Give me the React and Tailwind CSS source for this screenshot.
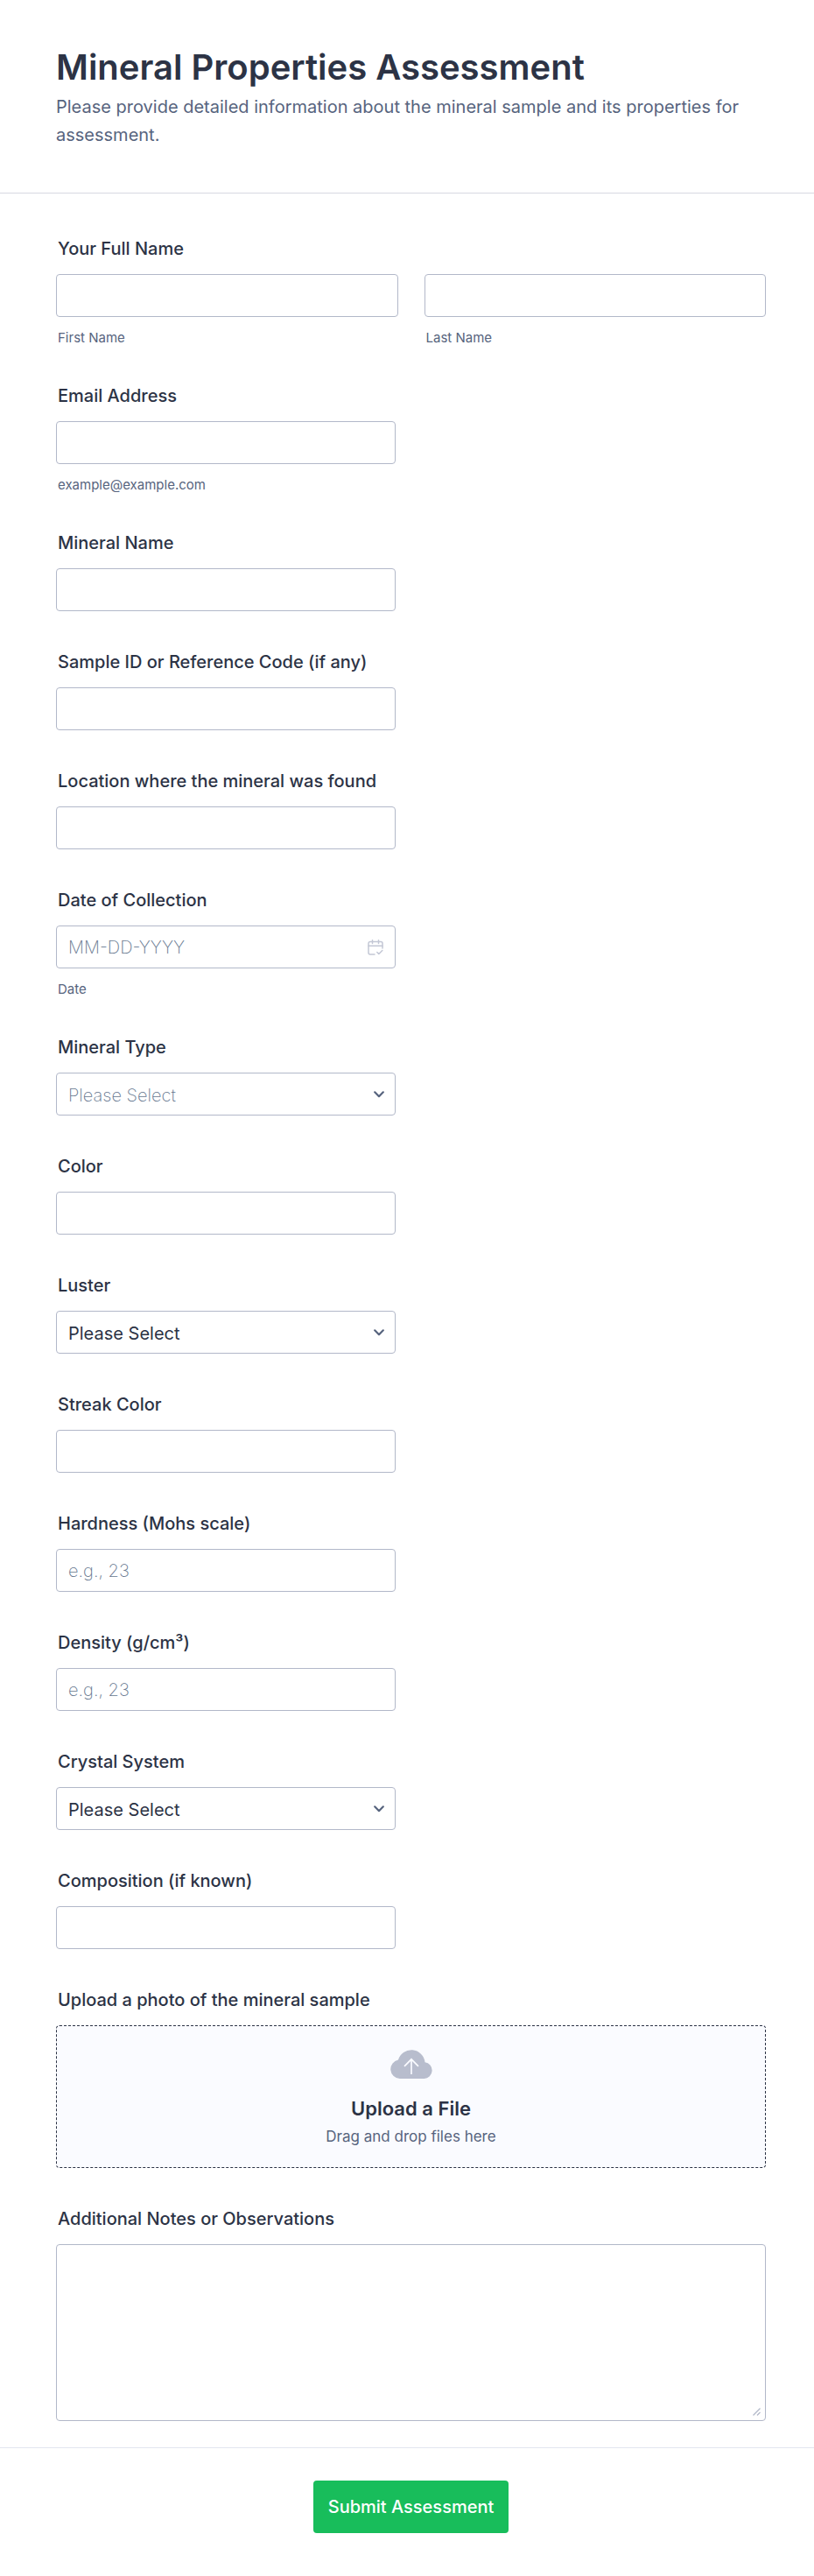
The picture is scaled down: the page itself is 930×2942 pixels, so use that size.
/**
 * Mineral Properties Assessment form.
 *
 * Single column form card: header, list of fields, file drop area,
 * notes and a centered submit button.
 */

const INPUT_CLASS =
  "h-[49px] rounded border border-[#b2b8c9] bg-white px-[13px] text-[20px] outline-none placeholder:font-extralight placeholder:text-[#66778f] focus:border-blue-500";

// Fields between the name row and the upload area, in display order
const FIELDS = [
  { id: "email", label: "Email Address", type: "email", hint: "example@example.com" },
  { id: "mineral-name", label: "Mineral Name" },
  { id: "sample-id", label: "Sample ID or Reference Code (if any)" },
  { id: "location", label: "Location where the mineral was found" },
  { id: "collection-date", label: "Date of Collection", kind: "date", placeholder: "MM-DD-YYYY", hint: "Date" },
  {
    id: "mineral-type",
    label: "Mineral Type",
    kind: "select",
    muted: true,
    options: ["Silicate", "Carbonate", "Oxide", "Sulfide", "Other"],
  },
  { id: "color", label: "Color" },
  {
    id: "luster",
    label: "Luster",
    kind: "select",
    options: ["Metallic", "Vitreous", "Pearly", "Silky", "Dull"],
  },
  { id: "streak-color", label: "Streak Color" },
  { id: "hardness", label: "Hardness (Mohs scale)", placeholder: "e.g., 23" },
  { id: "density", label: "Density (g/cm³)", placeholder: "e.g., 23" },
  {
    id: "crystal-system",
    label: "Crystal System",
    kind: "select",
    options: ["Cubic", "Tetragonal", "Hexagonal", "Monoclinic", "Triclinic"],
  },
  { id: "composition", label: "Composition (if known)" },
];

function CalendarIcon({ className }) {
  return (
    <svg viewBox="0 0 18 18" fill="none" stroke="currentColor" strokeWidth="1.5" strokeLinecap="round" className={className}>
      <path d="M8 17H3a2 2 0 0 1-2-2V4.500a2 2 0 0 1 2-2h12a2 2 0 0 1 2 2V10" />
      <path d="M1 7.200h16M5.500.800v3.600M12.500.800v3.600" />
      <path d="M10.800 14.500l2 2 4-4" strokeLinejoin="round" />
    </svg>
  );
}

function ChevronIcon({ className }) {
  return (
    <svg viewBox="0 0 12 8" fill="none" stroke="currentColor" strokeWidth="2.200" strokeLinecap="round" strokeLinejoin="round" className={className}>
      <path d="M1.200 1.300L6 6.200l4.800-4.900" />
    </svg>
  );
}

function CloudUploadIcon({ className }) {
  return (
    <svg viewBox="0 0 48 33" fill="none" className={className}>
      <path
        d="M10.8 33A10.8 10.8 0 0 1 9 11.6A15.6 15.6 0 0 1 39.500 14.200A9.450 9.450 0 0 1 38.600 33Z"
        fill="#b8bdcd"
      />
      <path d="M24 28V11M16 18.800l8-8 8 8" stroke="#fafbff" strokeWidth="1.700" />
    </svg>
  );
}

function GripIcon({ className }) {
  return (
    <svg viewBox="0 0 9 9" fill="none" stroke="currentColor" strokeWidth="1.300" className={className}>
      <path d="M.500 8.500l8-8M5 8.500L8.500 5" />
    </svg>
  );
}

function Label({ htmlFor, children }) {
  return (
    <label htmlFor={htmlFor} className="block pl-0.5 text-[20px] leading-6 font-medium">
      {children}
    </label>
  );
}

function Hint({ id, children }) {
  return (
    <p id={id} className="mt-[15px] pl-0.5 text-[15px] leading-[17px] text-[#57647e]">
      {children}
    </p>
  );
}

function NamePart({ id, label }) {
  return (
    <div className="flex flex-col">
      <input id={id} type="text" className={`${INPUT_CLASS} text-[#2c3345]`} />
      <label htmlFor={id} className="mt-[15px] pl-0.5 text-[15px] leading-[17px] text-[#57647e]">
        {label}
      </label>
    </div>
  );
}

/** Text, date or select field with its label and optional hint */
function Field({ id, label, kind = "text", type = "text", placeholder, hint, muted, options }) {
  const hintId = hint ? `${id}-hint` : undefined;

  return (
    <div>
      <Label htmlFor={id}>{label}</Label>
      <div className="relative mt-[17px] w-[388px] max-w-full">
        {kind === "select" ? (
          <>
            <select
              id={id}
              defaultValue=""
              className={`${INPUT_CLASS} w-full appearance-none pt-0.5 ${muted ? "font-extralight text-[#66778f]" : "text-[#2c3345]"}`}
            >
              <option value="">Please Select</option>
              {options.map((option) => (
                <option key={option}>{option}</option>
              ))}
            </select>
            <ChevronIcon className="pointer-events-none absolute top-[21px] right-[13px] h-2 w-3 text-[#57647e]" />
          </>
        ) : (
          <>
            <input
              id={id}
              type={type}
              placeholder={placeholder}
              aria-describedby={hintId}
              className={`${INPUT_CLASS} w-full text-[#2c3345]`}
            />
            {kind === "date" && (
              <CalendarIcon className="pointer-events-none absolute top-4 right-[14px] size-[18px] text-[#c3c7d5]" />
            )}
          </>
        )}
      </div>
      {hint && <Hint id={hintId}>{hint}</Hint>}
    </div>
  );
}

export default function App() {
  return (
    <main className="bg-white font-['Inter',sans-serif] text-[#2c3345]">
      <form onSubmit={(e) => e.preventDefault()}>
        {/* Header */}
        <header className="border-b border-[#d7d8e1] pt-[52px] pr-[55px] pb-[50px] pl-16">
          <h1 className="text-[40px] leading-[50px] font-semibold">Mineral Properties Assessment</h1>
          <p className="mt-1 text-[20px] leading-8 text-[#57647e]">
            Please provide detailed information about the mineral sample and its properties for assessment.
          </p>
        </header>

        {/* Fields */}
        <div className="flex flex-col gap-[46px] pt-[51px] pr-[55px] pb-[30px] pl-16">
          <fieldset>
            <legend className="pl-0.5 text-[20px] leading-6 font-medium">Your Full Name</legend>
            <div className="mt-[17px] grid grid-cols-2 gap-[30px]">
              <NamePart id="first-name" label="First Name" />
              <NamePart id="last-name" label="Last Name" />
            </div>
          </fieldset>

          {FIELDS.map((field) => (
            <Field key={field.id} {...field} />
          ))}

          {/* File drop area */}
          <div>
            <Label htmlFor="photo">Upload a photo of the mineral sample</Label>
            <label
              htmlFor="photo"
              className="mt-[17px] flex cursor-pointer flex-col items-center rounded border border-dashed border-[#2c3345] bg-[#fafbff] pt-[27px] pb-[23px]"
            >
              <CloudUploadIcon className="h-[33px] w-12" />
              <span className="mt-5 text-[22px] leading-7 font-semibold">Upload a File</span>
              <span className="mt-1.5 text-[17px] leading-6 text-[#57647e]">Drag and drop files here</span>
              <input id="photo" type="file" accept="image/*" className="sr-only" />
            </label>
          </div>

          <div>
            <Label htmlFor="notes">Additional Notes or Observations</Label>
            <div className="relative mt-[17px]">
              <textarea
                id="notes"
                className="block h-[202px] w-full resize-none rounded border border-[#b2b8c9] px-[13px] py-2.5 text-[20px] outline-none focus:border-blue-500"
              />
              <GripIcon className="pointer-events-none absolute right-1.5 bottom-1.5 size-[9px] text-[#b2b8c9]" />
            </div>
          </div>
        </div>

        {/* Submit */}
        <footer className="flex justify-center border-t border-[#e3e5f0] pt-[37px] pr-[55px] pb-[49px] pl-16">
          <button
            type="submit"
            className="h-[60px] rounded bg-[#18bd5b] px-[17px] text-[20px] font-medium text-white hover:bg-[#16aa52]"
          >
            Submit Assessment
          </button>
        </footer>
      </form>
    </main>
  );
}
